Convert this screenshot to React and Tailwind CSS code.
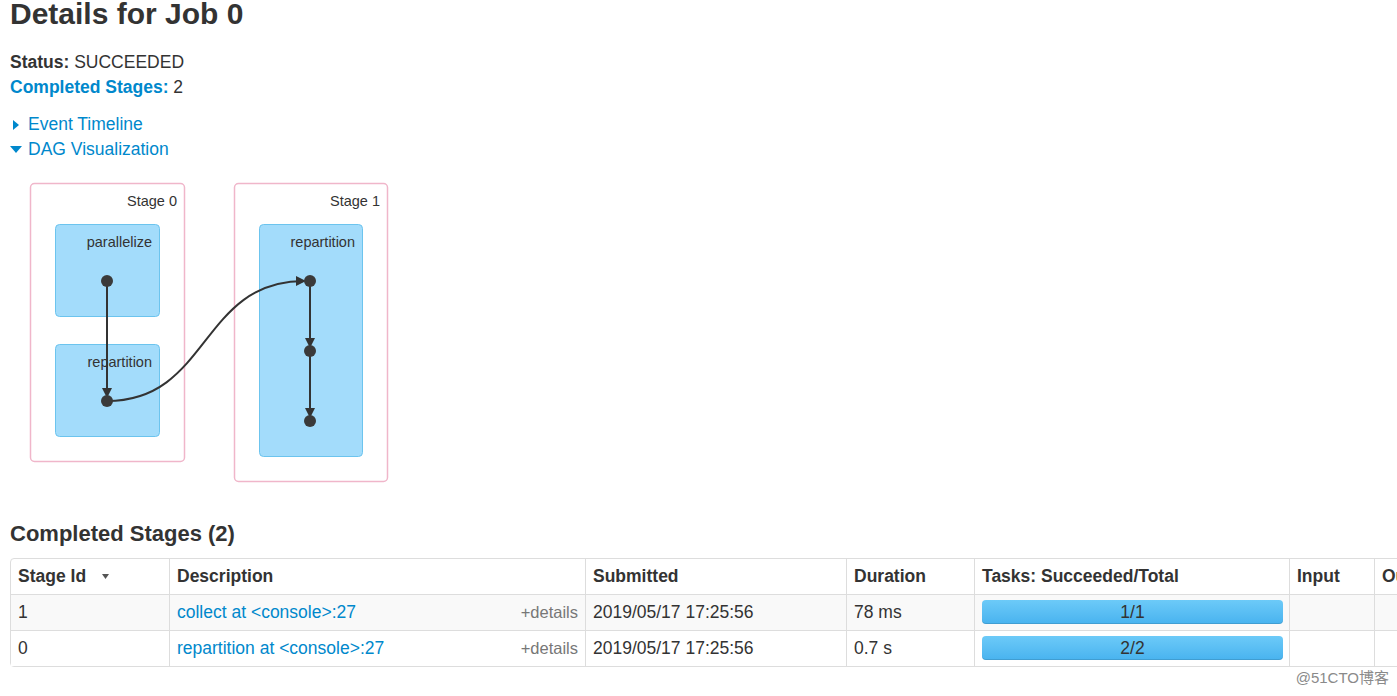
import React from "react"

const stages = [
  { id: "1", desc: "collect at <console>:27", submitted: "2019/05/17 17:25:56", duration: "78 ms", tasks: "1/1" },
  { id: "0", desc: "repartition at <console>:27", submitted: "2019/05/17 17:25:56", duration: "0.7 s", tasks: "2/2" },
]

const DagViz = () => (
  <svg width="400" height="330" viewBox="0 162 400 330" className="block">
    <defs>
      <marker id="arrow" viewBox="0 0 10 10" refX="8" refY="5" markerWidth="5" markerHeight="5" orient="auto">
        <path d="M0,0 L10,5 L0,10 z" fill="#333" />
      </marker>
    </defs>
    {/* stage clusters */}
    <rect x="30.5" y="183.5" width="154" height="278" rx="4" fill="#fff" stroke="#f0b6ca" strokeWidth="1.5" />
    <rect x="234.5" y="183.5" width="153" height="298" rx="4" fill="#fff" stroke="#f0b6ca" strokeWidth="1.5" />
    <text x="177" y="206" textAnchor="end" fontSize="14.5" fill="#333">Stage 0</text>
    <text x="380" y="206" textAnchor="end" fontSize="14.5" fill="#333">Stage 1</text>

    {/* operation boxes */}
    <rect x="55.5" y="224.5" width="104" height="92" rx="4" fill="#a3dcfb" stroke="#6cc4ee" />
    <rect x="55.5" y="344.5" width="104" height="92" rx="4" fill="#a3dcfb" stroke="#6cc4ee" />
    <rect x="259.5" y="224.5" width="103" height="232" rx="4" fill="#a3dcfb" stroke="#6cc4ee" />
    <text x="152" y="367" textAnchor="end" fontSize="14.5" fill="#333">repartition</text>
    <text x="152" y="247" textAnchor="end" fontSize="14.5" fill="#333">parallelize</text>
    <text x="355" y="247" textAnchor="end" fontSize="14.5" fill="#333">repartition</text>

    {/* edges */}
    <g stroke="#333" strokeWidth="2" fill="none" markerEnd="url(#arrow)">
      <path d="M107,281 L107,396" />
      <path d="M107,401 C210,401 200,281 304,281" />
      <path d="M310,281 L310,346" />
      <path d="M310,351 L310,416" />
    </g>

    {/* nodes */}
    <g fill="#3a3a3a">
      <circle cx="107" cy="281" r="6" />
      <circle cx="107" cy="401" r="6" />
      <circle cx="310" cy="281" r="6" />
      <circle cx="310" cy="351" r="6" />
      <circle cx="310" cy="421" r="6" />
    </g>
  </svg>
)

const cols = [
  { label: "Stage Id", w: "w-[158px]" },
  { label: "Description", w: "w-[416px]" },
  { label: "Submitted", w: "w-[261px]" },
  { label: "Duration", w: "w-[128px]" },
  { label: "Tasks: Succeeded/Total", w: "w-[315px]" },
  { label: "Input", w: "w-[85px]" },
  { label: "Output", w: "w-[120px]" },
]

export default function App() {
  return (
    <div
      className="relative w-[1397px] h-[696px] overflow-hidden bg-white text-[#333] text-[17.5px] leading-[25px]"
      style={{ fontFamily: '"Liberation Sans", Arial, sans-serif' }}
    >
      <div className="pl-[10px]">
        <h1 className="mt-[-3px] text-[30px] leading-[33px] font-bold text-[#333]">Details for Job 0</h1>

        <div className="mt-[20px]">
          <div>
            <span className="font-bold">Status:</span> SUCCEEDED
          </div>
          <div>
            <span className="font-bold text-[#0088cc]">Completed Stages:</span> 2
          </div>
        </div>

        <div className="mt-[12px] text-[#0088cc]">
          <div className="flex items-center">
            <span className="w-[18px] flex justify-start pl-[3px]">
              <svg width="6" height="10" viewBox="0 0 6 10"><path d="M0,0 L6,5 L0,10 z" fill="#0088cc" /></svg>
            </span>
            Event Timeline
          </div>
          <div className="flex items-center">
            <span className="w-[18px] flex justify-start">
              <svg width="12" height="7" viewBox="0 0 12 7"><path d="M0,0 L12,0 L6,7 z" fill="#0088cc" /></svg>
            </span>
            DAG Visualization
          </div>
        </div>
      </div>

      <DagViz />

      <div className="pl-[10px]">
        <h4 className="mt-[29px] mb-[12px] text-[22px] leading-[25px] font-bold">Completed Stages (2)</h4>

        <div className="w-[1500px] border border-[#ddd] rounded-[4px]">
          <div className="flex font-bold h-[35px]">
            {cols.map((c, i) => (
              <div
                key={c.label}
                className={`${c.w} shrink-0 px-[7px] pt-[5px] flex items-start ${i > 0 ? "border-l border-[#ddd]" : ""}`}
              >
                {c.label}
                {i === 0 && (
                  <svg className="ml-[16px] mt-[10px]" width="7" height="5" viewBox="0 0 7 5">
                    <path d="M0,0 L7,0 L3.5,5 z" fill="#555" />
                  </svg>
                )}
              </div>
            ))}
          </div>

          {stages.map((s, r) => (
            <div key={s.id} className={`flex h-[36px] border-t border-[#ddd] ${r === 0 ? "bg-[#f9f9f9]" : "bg-white"}`}>
              <div className="w-[158px] shrink-0 px-[7px] pt-[5px]">{s.id}</div>
              <div className="w-[416px] shrink-0 px-[7px] pt-[5px] border-l border-[#ddd] flex justify-between">
                <span className="text-[#0088cc]">{s.desc}</span>
                <span className="text-[#777] text-[16.5px]">+details</span>
              </div>
              <div className="w-[261px] shrink-0 px-[7px] pt-[5px] border-l border-[#ddd]">{s.submitted}</div>
              <div className="w-[128px] shrink-0 px-[7px] pt-[5px] border-l border-[#ddd]">{s.duration}</div>
              <div className="w-[315px] shrink-0 pl-[7px] pr-[6px] pt-[5px] border-l border-[#ddd]">
                <div className="h-[24px] rounded-[4px] bg-gradient-to-b from-[#6ccaf8] to-[#48b3ef] shadow-[inset_0_-1px_0_rgba(0,0,0,0.12)] flex items-center justify-center text-[#333] leading-[24px]">
                  {s.tasks}
                </div>
              </div>
              <div className="w-[85px] shrink-0 border-l border-[#ddd]"></div>
              <div className="w-[120px] shrink-0 border-l border-[#ddd]"></div>
            </div>
          ))}
        </div>
      </div>

      <div
        className="absolute right-[8px] top-[668px] text-[15px] leading-[20px] text-[#8a8a8a]"
        style={{ fontFamily: '"Liberation Sans", "Noto Sans CJK SC", sans-serif' }}
      >
        @51CTO博客
      </div>
    </div>
  )
}
